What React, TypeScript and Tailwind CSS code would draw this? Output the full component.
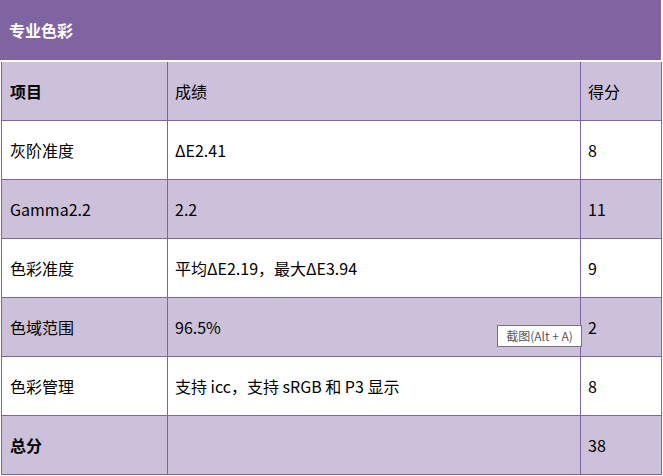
import React from 'react';

interface Row {
  item: string;
  result: string;
  score: string;
  shaded: boolean;
  bold?: boolean;
}

const rows: Row[] = [
  { item: '项目', result: '成绩', score: '得分', shaded: true, bold: true },
  { item: '灰阶准度', result: 'ΔE2.41', score: '8', shaded: false },
  { item: 'Gamma2.2', result: '2.2', score: '11', shaded: true },
  { item: '色彩准度', result: '平均ΔE2.19，最大ΔE3.94', score: '9', shaded: false },
  { item: '色域范围', result: '96.5%', score: '2', shaded: true },
  { item: '色彩管理', result: '支持 icc，支持 sRGB 和 P3 显示', score: '8', shaded: false },
  { item: '总分', result: '', score: '38', shaded: true, bold: true },
];

export default function App() {
  return (
    <div
      className="relative w-[663px] h-[476px] bg-white text-[16px] text-black"
      style={{ fontFamily: '"Noto Sans CJK SC", "Noto Sans", sans-serif' }}
    >
      {/* 标题栏 */}
      <div className="w-[661px] h-[60px] bg-[#8064a2] flex items-center pl-[9px] text-white font-bold">
        专业色彩
      </div>
      <div className="h-[2px]" />

      {/* 表格 */}
      <div className="ml-[1px] w-[661px] border-x border-[#8064a2]">
        {rows.map((row, i) => (
          <div
            key={i}
            className={`flex h-[59px] border-b border-[#8064a2] ${
              row.shaded ? 'bg-[#ccc0da]' : 'bg-white'
            }`}
          >
            <div
              className={`w-[166px] shrink-0 border-r border-[#8064a2] flex items-center pl-[8px] ${
                row.bold ? 'font-bold' : ''
              }`}
            >
              {row.item}
            </div>
            <div className="w-[413px] shrink-0 border-r border-[#8064a2] flex items-center pl-[7px]">
              {row.result}
            </div>
            <div className="flex-1 flex items-center pl-[7px]">{row.score}</div>
          </div>
        ))}
      </div>

      {/* 提示 */}
      <div className="absolute left-[497px] top-[325px] w-[85px] h-[22px] flex items-center justify-center bg-white border border-[#767676] text-[12px] text-[#575757] whitespace-pre">
        截图(Alt + A)
      </div>
    </div>
  );
}
